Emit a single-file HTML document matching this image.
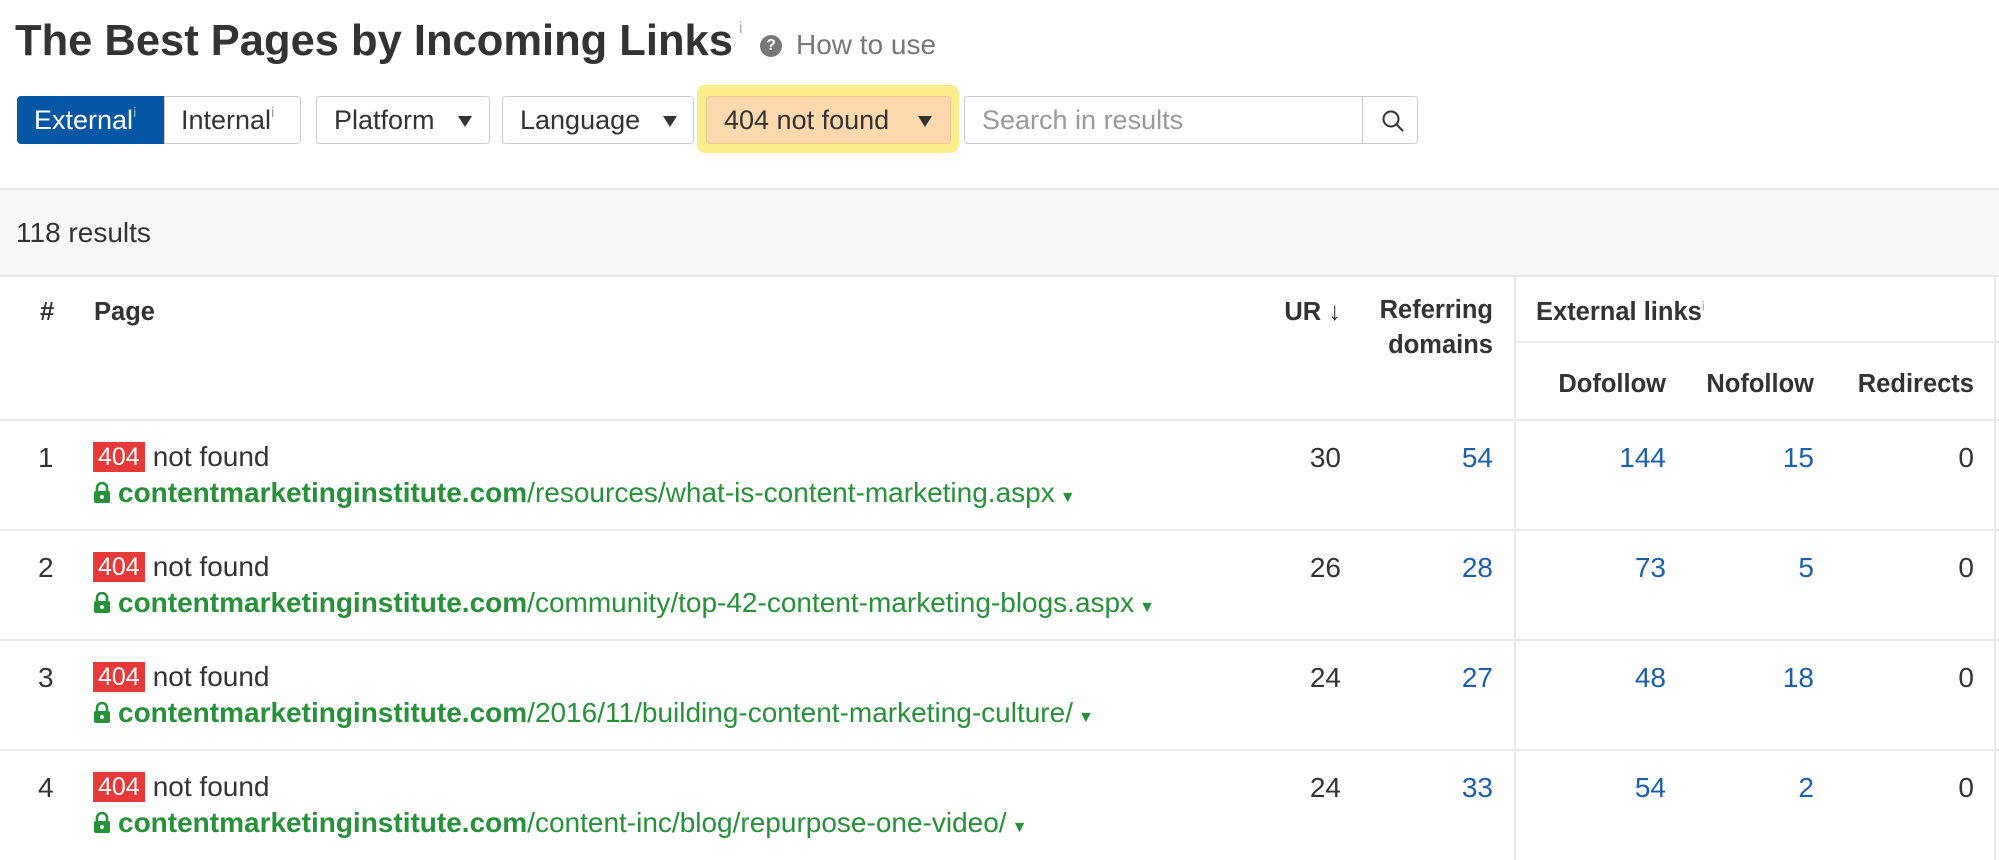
<!DOCTYPE html>
<html><head><meta charset="utf-8"><style>
*{margin:0;padding:0;box-sizing:border-box}
body{width:1999px;height:860px;background:#fff;font-family:"Liberation Sans",Arial,sans-serif;color:#333;position:relative;overflow:hidden}
.a{position:absolute;white-space:nowrap}
.btn{position:absolute;top:96px;height:48px;border:1px solid #ccc;border-radius:4px;background:#fff;font-size:27px;line-height:46px;padding-left:17px;color:#333}
.tri{display:inline-block;width:0;height:0;border-left:7px solid transparent;border-right:7px solid transparent;border-top:11px solid #333;position:absolute;top:19px}
.h{font-weight:bold;font-size:25.5px;color:#333}
.r{text-align:right}
.blue{color:#1c5fad}
.badge{display:inline-block;background:#e8393a;color:#fff;padding:0 5px;height:30px;line-height:30px;font-size:25px;margin-right:8px;vertical-align:1px}
.grn{color:#27913a;font-size:28px}
.num{font-size:28px}
sup.i{font-size:14px;line-height:0;vertical-align:12px}
</style></head><body>
<div class="a" style="left:15px;top:17px;font-size:43.5px;font-weight:bold;color:#333">The Best Pages by Incoming Links<sup style="font-size:16px;color:#aaa;font-weight:normal;vertical-align:22px;margin-left:6px">i</sup></div>
<div class="a" style="left:760px;top:35px;width:22px;height:22px;border-radius:50%;background:#777;color:#fff;font-size:16px;font-weight:bold;text-align:center;line-height:22px">?</div>
<div class="a" style="left:796px;top:29px;font-size:28px;color:#777">How to use</div>

<div class="btn" style="left:17px;width:148px;background:#0557a5;border-color:#0557a5;color:#fff;border-radius:4px 0 0 4px;padding-left:16px">External<sup class="i" style="color:#9bb">i</sup></div>
<div class="btn" style="left:164px;width:137px;border-radius:0 4px 4px 0;padding-left:16px">Internal<sup class="i" style="color:#999">i</sup></div>
<div class="btn" style="left:316px;width:174px">Platform<span class="tri" style="left:141px"></span></div>
<div class="btn" style="left:502px;width:192px">Language<span class="tri" style="left:160px"></span></div>
<div class="a" style="left:697px;top:85px;width:262px;height:68px;background:#fbec8c;border-radius:8px"></div>
<div class="btn" style="left:706px;width:245px;background:#fdd9ad;border-color:#f0c896">404 not found<span class="tri" style="left:211px"></span></div>
<div class="btn" style="left:964px;width:454px;color:#999;padding-left:17px">Search in results
<div style="position:absolute;left:397px;top:0;width:1px;height:46px;background:#ccc"></div>
<svg style="position:absolute;left:416px;top:12px" width="24" height="24" viewBox="0 0 24 24"><circle cx="10" cy="10" r="7.5" fill="none" stroke="#333" stroke-width="2"/><line x1="15.5" y1="15.5" x2="22" y2="22" stroke="#333" stroke-width="2"/></svg></div>

<div class="a" style="left:0;top:188px;width:1999px;height:89px;background:#f7f7f7;border-top:2px solid #e6e6e6;border-bottom:2px solid #e6e6e6"></div>
<div class="a" style="left:16px;top:217px;font-size:28px;color:#333">118 results</div>

<div class="a" style="left:1514px;top:277px;width:2px;height:583px;background:#e8e8e8"></div>
<div class="a" style="left:1994px;top:277px;width:2px;height:583px;background:#e8e8e8"></div>
<div class="a" style="left:1515px;top:341px;width:484px;height:2px;background:#e8e8e8"></div>
<div class="a" style="left:0;top:419px;width:1999px;height:2px;background:#e8e8e8"></div>
<div class="a" style="left:0;top:529px;width:1999px;height:2px;background:#e8e8e8"></div>
<div class="a" style="left:0;top:639px;width:1999px;height:2px;background:#e8e8e8"></div>
<div class="a" style="left:0;top:749px;width:1999px;height:2px;background:#e8e8e8"></div>

<div class="a h" style="left:40px;top:298px">#</div>
<div class="a h" style="left:94px;top:298px">Page</div>
<div class="a h r" style="right:658px;top:298px">UR ↓</div>
<div class="a h r" style="right:506px;line-height:35px;top:293px">Referring<br>domains</div>
<div class="a h" style="left:1536px;top:298px">External links<sup style="font-size:13px;color:#aaa;font-weight:normal">i</sup></div>
<div class="a h r" style="right:333px;top:370px">Dofollow</div>
<div class="a h r" style="right:185px;top:370px">Nofollow</div>
<div class="a h r" style="right:25px;top:370px">Redirects</div>

<div class="a num" style="left:38px;top:442px">1</div>
<div class="a" style="left:93px;top:441px;font-size:28px"><span class="badge">404</span>not found</div>
<div class="a grn" style="left:93px;top:477px"><svg width="18" height="22" viewBox="0 0 18 22" style="vertical-align:-2px;margin-right:7px"><path d="M4 9V6a5 5 0 0 1 10 0v3" fill="none" stroke="#27913a" stroke-width="2.6"/><rect x="1" y="9" width="16" height="12" rx="2" fill="#27913a"/><circle cx="9" cy="15" r="2" fill="#fff"/></svg><b>contentmarketinginstitute.com</b>/resources/what-is-content-marketing.aspx<span style="font-size:16px;margin-left:5px">▼</span></div>
<div class="a num r" style="right:658px;top:442px">30</div>
<div class="a num r blue" style="right:506px;top:442px">54</div>
<div class="a num r blue" style="right:333px;top:442px">144</div>
<div class="a num r blue" style="right:185px;top:442px">15</div>
<div class="a num r" style="right:25px;top:442px">0</div>

<div class="a num" style="left:38px;top:552px">2</div>
<div class="a" style="left:93px;top:551px;font-size:28px"><span class="badge">404</span>not found</div>
<div class="a grn" style="left:93px;top:587px"><svg width="18" height="22" viewBox="0 0 18 22" style="vertical-align:-2px;margin-right:7px"><path d="M4 9V6a5 5 0 0 1 10 0v3" fill="none" stroke="#27913a" stroke-width="2.6"/><rect x="1" y="9" width="16" height="12" rx="2" fill="#27913a"/><circle cx="9" cy="15" r="2" fill="#fff"/></svg><b>contentmarketinginstitute.com</b>/community/top-42-content-marketing-blogs.aspx<span style="font-size:16px;margin-left:5px">▼</span></div>
<div class="a num r" style="right:658px;top:552px">26</div>
<div class="a num r blue" style="right:506px;top:552px">28</div>
<div class="a num r blue" style="right:333px;top:552px">73</div>
<div class="a num r blue" style="right:185px;top:552px">5</div>
<div class="a num r" style="right:25px;top:552px">0</div>

<div class="a num" style="left:38px;top:662px">3</div>
<div class="a" style="left:93px;top:661px;font-size:28px"><span class="badge">404</span>not found</div>
<div class="a grn" style="left:93px;top:697px"><svg width="18" height="22" viewBox="0 0 18 22" style="vertical-align:-2px;margin-right:7px"><path d="M4 9V6a5 5 0 0 1 10 0v3" fill="none" stroke="#27913a" stroke-width="2.6"/><rect x="1" y="9" width="16" height="12" rx="2" fill="#27913a"/><circle cx="9" cy="15" r="2" fill="#fff"/></svg><b>contentmarketinginstitute.com</b>/2016/11/building-content-marketing-culture/<span style="font-size:16px;margin-left:5px">▼</span></div>
<div class="a num r" style="right:658px;top:662px">24</div>
<div class="a num r blue" style="right:506px;top:662px">27</div>
<div class="a num r blue" style="right:333px;top:662px">48</div>
<div class="a num r blue" style="right:185px;top:662px">18</div>
<div class="a num r" style="right:25px;top:662px">0</div>

<div class="a num" style="left:38px;top:772px">4</div>
<div class="a" style="left:93px;top:771px;font-size:28px"><span class="badge">404</span>not found</div>
<div class="a grn" style="left:93px;top:807px"><svg width="18" height="22" viewBox="0 0 18 22" style="vertical-align:-2px;margin-right:7px"><path d="M4 9V6a5 5 0 0 1 10 0v3" fill="none" stroke="#27913a" stroke-width="2.6"/><rect x="1" y="9" width="16" height="12" rx="2" fill="#27913a"/><circle cx="9" cy="15" r="2" fill="#fff"/></svg><b>contentmarketinginstitute.com</b>/content-inc/blog/repurpose-one-video/<span style="font-size:16px;margin-left:5px">▼</span></div>
<div class="a num r" style="right:658px;top:772px">24</div>
<div class="a num r blue" style="right:506px;top:772px">33</div>
<div class="a num r blue" style="right:333px;top:772px">54</div>
<div class="a num r blue" style="right:185px;top:772px">2</div>
<div class="a num r" style="right:25px;top:772px">0</div>
</body></html>
